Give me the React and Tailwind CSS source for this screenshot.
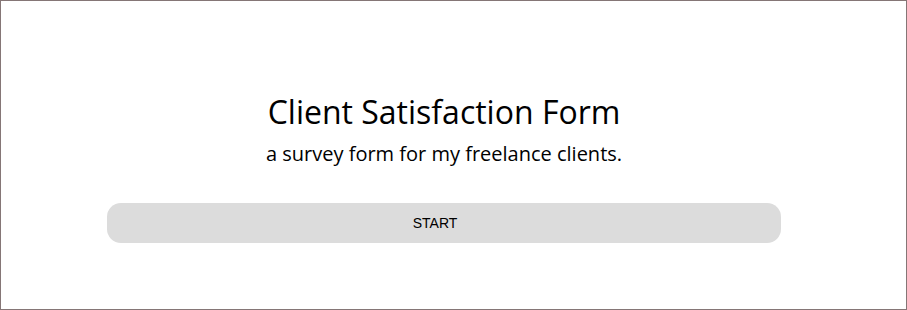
import React from 'react';

export default function App() {
  return (
    <div className="w-[907px] h-[310px] border border-[#857676] bg-white pl-[106px] pr-[125px] pt-[89px]">
      <div className="flex flex-col items-center" style={{ fontFamily: '"Open Sans", "Noto Sans", sans-serif' }}>
        <h1 className="text-[32px] leading-[44px] text-black">Client Satisfaction Form</h1>
        <p className="text-[20px] leading-[28px] text-black mt-[6px]">a survey form for my freelance clients.</p>
        <button
          className="mt-[35px] w-full h-[40px] rounded-[14px] bg-[#dcdcdc] pr-[18px] text-[14px] text-black"
          style={{ fontFamily: '"Liberation Sans", Arial, sans-serif' }}
        >
          START
        </button>
      </div>
    </div>
  );
}
